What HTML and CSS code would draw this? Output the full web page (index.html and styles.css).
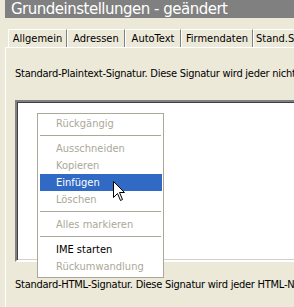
FILE: index.html
```html
<!DOCTYPE html>
<html lang="de">
<head>
    <meta charset="UTF-8">
    <title>Grundeinstellungen</title>
    <link rel="stylesheet" href="styles.css">
</head>
<body>
    <div class="window">
        <div class="titlebar">Grundeinstellungen - geändert</div>

        <div class="tabs">
            <div class="tab">Allgemein</div>
            <div class="tab">Adressen</div>
            <div class="tab">AutoText</div>
            <div class="tab">Firmendaten</div>
            <div class="tab">Stand.Signatur</div>
        </div>

        <div class="panel">
            <p class="label">Standard-Plaintext-Signatur. Diese Signatur wird jeder nicht formatierten Nachricht angefügt.</p>
            <div class="editbox"></div>
            <p class="label">Standard-HTML-Signatur. Diese Signatur wird jeder HTML-Nachricht angefügt.</p>
        </div>

        <!-- Kontextmenü über dem Eingabefeld -->
        <ul class="menu">
            <li class="item disabled">Rückgängig</li>
            <li class="sep"></li>
            <li class="item disabled">Ausschneiden</li>
            <li class="item disabled">Kopieren</li>
            <li class="item active">Einfügen</li>
            <li class="item disabled">Löschen</li>
            <li class="sep"></li>
            <li class="item disabled">Alles markieren</li>
            <li class="sep"></li>
            <li class="item">IME starten</li>
            <li class="item disabled">Rückumwandlung</li>
        </ul>

        <svg class="cursor" width="13" height="21" viewBox="0 0 13 21">
            <path d="M0.5 0.5 L0.5 16.5 L4.5 12.5 L7.5 19.5 L9.5 18.5 L6.5 11.5 L11.5 11.5 Z" fill="#fff" stroke="#000" stroke-width="1"/>
        </svg>
    </div>
</body>
</html>
```

FILE: styles.css
```css
* {
    margin: 0;
    padding: 0;
    box-sizing: border-box;
}

body {
    background: #ece9d8;
    font-family: 'DejaVu Sans Condensed', 'DejaVu Sans', sans-serif;
    font-size: 11px;
    color: #000;
    overflow: hidden;
}

.window {
    position: relative;
    width: 294px;
    height: 307px;
    overflow: hidden;
}

.titlebar {
    margin-left: 5px;
    height: 18px;
    background: #808080;
    color: #fff;
    font-family: 'DejaVu Sans', sans-serif;
    font-size: 15px;
    letter-spacing: -0.5px;
    line-height: 19px;
    padding-left: 6px;
    white-space: nowrap;
}

.tabs {
    display: flex;
    margin-top: 11px;
    padding-left: 8px;
    height: 18px;
    white-space: nowrap;
}

.tab {
    flex: none;
    height: 18px;
    line-height: 18px;
    border-left: 1px solid #fff;
    border-top: 1px solid #fff;
    border-right: 1px solid #808080;
    text-align: center;
}

.tab:nth-child(1) { width: 59px; }
.tab:nth-child(2) { width: 58px; }
.tab:nth-child(3) { width: 56px; }
.tab:nth-child(4) { width: 72px; }
.tab:nth-child(5) { width: 80px; text-align: left; padding-left: 2px; }

.panel {
    margin-left: 5px;
    border-left: 1px solid #fff;
    border-top: 1px solid #fff;
    height: 260px;
    padding: 19px 0 0 9px;
}

.label {
    white-space: nowrap;
    line-height: 13px;
    letter-spacing: -0.25px;
}

.editbox {
    margin: 20px -20px 16px 0;
    height: 162px;
    background: #fff;
    border-style: solid;
    border-width: 2px;
    border-color: #808080 #fff #fff #808080;
    box-shadow: inset 1px 1px 0 #404040, inset -1px -1px 0 #d4d0c8;
}

.menu {
    position: absolute;
    left: 37px;
    top: 113px;
    width: 127px;
    list-style: none;
    background: #fff;
    border: 1px solid #aca899;
    padding: 1px 1px 2px 2px;
}

.item {
    height: 17px;
    line-height: 17px;
    padding-left: 16px;
    white-space: nowrap;
}

.disabled {
    color: #aca899;
}

.active {
    background: #316ac5;
    color: #fff;
}

.sep {
    height: 8px;
    padding-top: 3px;
}

.sep::before {
    content: "";
    display: block;
    height: 1px;
    margin-right: 1px;
    background: #aca899;
}

.cursor {
    position: absolute;
    left: 113px;
    top: 181px;
}
```
